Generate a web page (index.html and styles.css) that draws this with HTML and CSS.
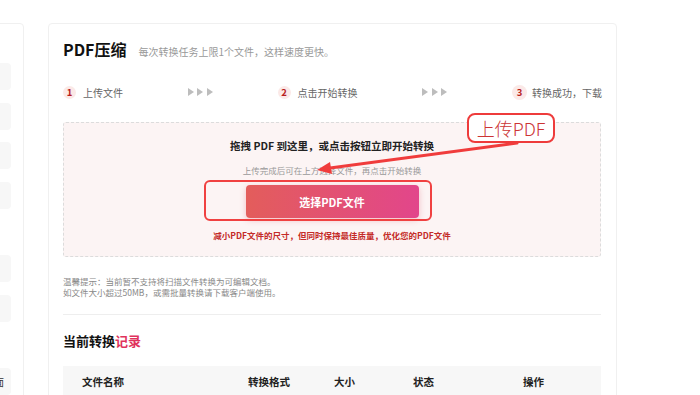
FILE: index.html
```html
<!DOCTYPE html>
<html lang="zh-CN">
<head>
  <meta charset="UTF-8" />
  <meta name="viewport" content="width=device-width, initial-scale=1.0"/>
  <title>PDF压缩</title>
  <link rel="stylesheet" href="styles.css">
</head>
<body>
  <div class="page">
    <aside class="sidebar">
      <div class="side-group">
        <div class="side-item"></div>
        <div class="side-item"></div>
        <div class="side-item"></div>
        <div class="side-item"></div>
      </div>
      <div class="side-group">
        <div class="side-item"></div>
        <div class="side-item"></div>
      </div>
      <div class="side-group">
        <div class="side-item">页面</div>
      </div>
    </aside>

    <main class="card">
      <div class="card-head">
        <h1>PDF压缩</h1>
        <span class="card-sub">每次转换任务上限1个文件，这样速度更快。</span>
      </div>

      <div class="steps">
        <div class="step"><span class="step-num">1</span>上传文件</div>
        <div class="step-arrows"><i></i><i></i><i></i></div>
        <div class="step"><span class="step-num">2</span>点击开始转换</div>
        <div class="step-arrows"><i></i><i></i><i></i></div>
        <div class="step step-last"><span class="step-num">3</span>转换成功，下载</div>
      </div>

      <div class="dropzone">
        <div class="drop-title">拖拽 PDF 到这里，或点击按钮立即开始转换</div>
        <div class="drop-hint">上传完成后可在上方选择文件，再点击开始转换</div>
        <button class="pick-btn" type="button">选择PDF文件</button>
        <div class="drop-note">减小PDF文件的尺寸，但同时保持最佳质量，优化您的PDF文件</div>

        <!-- annotation marks drawn over the screenshot -->
        <div class="mark-box"></div>
        <svg class="mark-arrow" viewBox="0 0 538 134" width="538" height="134">
          <line x1="453" y1="20" x2="266" y2="45" stroke="#f03c3c" stroke-width="3" stroke-linecap="round"/>
          <polygon points="253,47 268,51 266,39" fill="#f03c3c"/>
        </svg>
        <div class="mark-callout">上传PDF</div>
      </div>

      <div class="tips">
        <p>温馨提示：当前暂不支持将扫描文件转换为可编辑文档。</p>
        <p>如文件大小超过50MB，或需批量转换请下载客户端使用。</p>
      </div>

      <hr class="divider">

      <h2 class="records-title">当前转换<span>记录</span></h2>

      <div class="table-head">
        <span>文件名称</span>
        <span>转换格式</span>
        <span>大小</span>
        <span>状态</span>
        <span>操作</span>
      </div>
    </main>
  </div>
</body>
</html>
```

FILE: styles.css
```css
body {
  margin: 0;
  background: #ffffff;
  font-family: "Noto Sans CJK SC", "Noto Sans", sans-serif;
  color: #222;
  overflow: hidden;
}

.page {
  display: flex;
  align-items: flex-start;
  gap: 24px;
  padding-top: 23px;
}

.sidebar {
  flex: none;
  width: 160px;
  height: 420px;
  margin-left: -136px;
  padding: 39px 12px 0 0;
  border: 1px solid #f0f0f0;
  border-radius: 4px;
  box-sizing: border-box;
}

.side-group {
  display: flex;
  flex-direction: column;
  gap: 12.5px;
  margin-bottom: 46.5px;
}

.side-item {
  height: 27px;
  background: #f7f7f7;
  border-radius: 4px;
  font-size: 10px;
  line-height: 27px;
  text-align: right;
  padding-right: 7px;
  color: #333;
}

.card {
  flex: none;
  width: 569px;
  height: 420px;
  box-sizing: border-box;
  padding: 13px 14px 0;
  border: 1px solid #f0f0f0;
  border-radius: 4px;
}

.card-head {
  display: flex;
  align-items: baseline;
  gap: 12px;
  height: 24px;
}

.card-head h1 {
  margin: 0;
  font-size: 16px;
  line-height: 24px;
  font-weight: 700;
  color: #111;
}

.card-sub {
  font-size: 10px;
  color: #999;
}

.steps {
  display: flex;
  justify-content: space-between;
  align-items: center;
  margin-top: 24px;
  height: 14px;
  font-size: 10px;
  color: #666;
}

.step {
  display: flex;
  align-items: center;
  gap: 7px;
  white-space: nowrap;
}

.step-last {
  gap: 5px;
}

.step-num {
  width: 13px;
  height: 13px;
  border-radius: 50%;
  background: #fbe9e7;
  color: #b81d1d;
  font-weight: 700;
  font-size: 9.5px;
  line-height: 13px;
  text-align: center;
}

.step-last .step-num {
  width: 15px;
  height: 15px;
  line-height: 15px;
}

.step-arrows {
  display: flex;
  gap: 3.5px;
}

.step-arrows i {
  width: 0;
  height: 0;
  border-left: 6px solid #bdbdbd;
  border-top: 4px solid transparent;
  border-bottom: 4px solid transparent;
}

.dropzone {
  position: relative;
  margin-top: 23px;
  width: 538px;
  box-sizing: border-box;
  padding: 16px 0 14px;
  background: #fcf4f4;
  border: 1px dashed #dcdcdc;
  border-radius: 3px;
  text-align: center;
}

.drop-title {
  font-size: 10.5px;
  line-height: 14px;
  font-weight: 700;
  color: #222;
}

.drop-hint {
  margin-top: 10px;
  font-size: 8.5px;
  line-height: 14px;
  color: #999;
}

.pick-btn {
  display: block;
  margin: 8px auto 0;
  width: 173px;
  height: 33px;
  border: none;
  border-radius: 4px;
  background: linear-gradient(to right, #e35d5b, #e2468b);
  box-shadow: 0 2px 6px rgba(220, 70, 90, 0.3);
  color: #fff;
  font-family: inherit;
  font-size: 11px;
  font-weight: 700;
}

.drop-note {
  margin-top: 10px;
  font-size: 8.5px;
  line-height: 14px;
  font-weight: 700;
  color: #c42b28;
}

.mark-box {
  position: absolute;
  left: 140px;
  top: 57px;
  width: 228px;
  height: 41px;
  box-sizing: border-box;
  border: 2.5px solid #f04141;
  border-radius: 6px;
}

.mark-arrow {
  position: absolute;
  left: 0;
  top: 0;
  overflow: visible;
}

.mark-callout {
  position: absolute;
  left: 403px;
  top: -10px;
  width: 88px;
  height: 30px;
  box-sizing: border-box;
  border: 2px solid #ee3b3b;
  border-radius: 8px;
  background: #fff;
  color: #cc3434;
  font-size: 18px;
  line-height: 26px;
  font-weight: 300;
  text-align: center;
}

.tips {
  margin-top: 19px;
  font-size: 8.5px;
  line-height: 11px;
  color: #888;
}

.tips p {
  margin: 0;
}

.divider {
  margin: 16px 0 0;
  width: 538px;
  border: none;
  border-top: 1px solid #eeeeee;
}

.records-title {
  margin: 17px 0 0;
  font-size: 13px;
  line-height: 18px;
  font-weight: 700;
  color: #111;
}

.records-title span {
  color: #e0325c;
}

.table-head {
  display: grid;
  grid-template-columns: 166px 86px 79px 110px 1fr;
  align-items: center;
  margin-top: 16px;
  width: 538px;
  height: 30px;
  box-sizing: border-box;
  padding-left: 19px;
  background: #f7f7f7;
  font-size: 10.5px;
  font-weight: 700;
  color: #222;
}
```
